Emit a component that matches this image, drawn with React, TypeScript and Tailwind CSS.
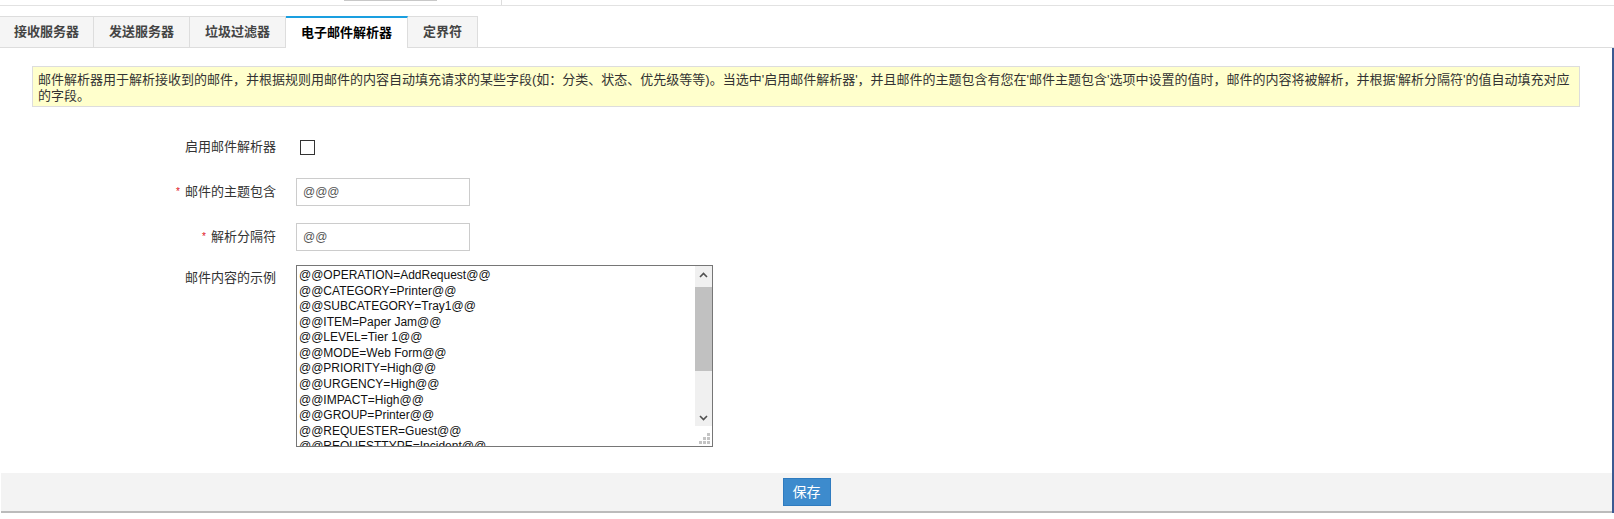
import React from "react";

const FONT = '"Liberation Sans", "Noto Sans CJK SC", Arial, sans-serif';

const tabs = [
  { label: "接收服务器", w: "w-[94px]", active: false },
  { label: "发送服务器", w: "w-[96px]", active: false },
  { label: "垃圾过滤器", w: "w-[96px]", active: false },
  { label: "电子邮件解析器", w: "w-[122px]", active: true },
  { label: "定界符", w: "w-[70px]", active: false },
];

const sampleLines = [
  "@@OPERATION=AddRequest@@",
  "@@CATEGORY=Printer@@",
  "@@SUBCATEGORY=Tray1@@",
  "@@ITEM=Paper Jam@@",
  "@@LEVEL=Tier 1@@",
  "@@MODE=Web Form@@",
  "@@PRIORITY=High@@",
  "@@URGENCY=High@@",
  "@@IMPACT=High@@",
  "@@GROUP=Printer@@",
  "@@REQUESTER=Guest@@",
  "@@REQUESTTYPE=Incident@@",
];

function Star() {
  return <span className="mr-[5px] text-[10px] leading-none text-[#e0151b]">*</span>;
}

export default function App() {
  return (
    <div className="w-[1614px] h-[519px] bg-white overflow-hidden text-[#333]" style={{ fontFamily: FONT }}>
      {/* top strip */}
      <div className="flex h-[6px] border-b border-[#e2e2e2]">
        <div className="w-[344px]" />
        <div className="w-[93px] h-px bg-[#c8c8c8]" />
        <div className="w-[64px]" />
        <div className="h-[5px] border-l border-[#dddddd]" />
      </div>

      {/* tabs */}
      <div className="mt-[10px] flex h-[32px] border-b border-[#dddddd]">
        {tabs.map((t) => (
          <div
            key={t.label}
            className={
              t.active
                ? `${t.w} -mb-px h-[32px] flex items-center justify-center border-t-2 border-t-[#1a9fe0] border-r border-r-[#dddddd] bg-white text-[13px] font-bold text-black`
                : `${t.w} h-[31px] flex items-center justify-center border-t border-r border-[#dddddd] bg-[#f5f5f5] text-[13px] font-bold text-[#444]`
            }
          >
            {t.label}
          </div>
        ))}
      </div>

      {/* content */}
      <div className="flex h-[465px] flex-col border-r-2 border-[#3b5a92]">
        <div className="mx-[32px] mt-[18px] border border-[#dddddd] bg-[#ffffcc] pl-[5px] pr-[4px] pt-[5px] pb-[2px] text-[13px] leading-[16px] text-[#333]">
          <div className="whitespace-nowrap">
            邮件解析器用于解析接收到的邮件，并根据规则用邮件的内容自动填充请求的某些字段(如：分类、状态、优先级等等)。当选中'启用邮件解析器'，并且邮件的主题包含有您在'邮件主题包含'选项中设置的值时，邮件的内容将被解析，并根据'解析分隔符'的值自动填充对应
          </div>
          <div>的字段。</div>
        </div>

        {/* row 1 */}
        <div className="mt-[26px] flex h-[28px] items-center">
          <div className="w-[276px] text-right text-[13px]">启用邮件解析器</div>
          <div className="ml-[24px] h-[15px] w-[15px] border border-[#333] bg-white" />
        </div>

        {/* row 2 */}
        <div className="mt-[17px] flex h-[28px] items-center">
          <div className="flex w-[276px] items-center justify-end text-[13px]">
            <Star />
            邮件的主题包含
          </div>
          <div className="ml-[20px] flex h-[28px] w-[174px] items-center border border-[#cccccc] bg-white pl-[6px] text-[12px] text-[#555]">
            @@@
          </div>
        </div>

        {/* row 3 */}
        <div className="mt-[17px] flex h-[28px] items-center">
          <div className="flex w-[276px] items-center justify-end text-[13px]">
            <Star />
            解析分隔符
          </div>
          <div className="ml-[20px] flex h-[28px] w-[174px] items-center border border-[#cccccc] bg-white pl-[6px] text-[12px] text-[#555]">
            @@
          </div>
        </div>

        {/* row 4 */}
        <div className="mt-[14px] flex items-start">
          <div className="w-[276px] pt-[4px] text-right text-[13px] leading-[17px]">邮件内容的示例</div>
          <div className="ml-[20px] flex h-[182px] w-[417px] border border-[#767676] bg-white">
            <div className="flex-1 overflow-hidden p-[2px] text-[12px] leading-[15.56px] text-[#111]">
              {sampleLines.map((l) => (
                <div key={l} className="whitespace-nowrap">
                  {l}
                </div>
              ))}
            </div>
            <div className="flex w-[17px] flex-col">
              <div className="flex h-[160px] flex-col bg-[#f0f0f0]">
                <div className="flex h-[17px] items-center justify-center">
                  <svg width="9" height="6" viewBox="0 0 9 6">
                    <polyline points="1,5 4.5,1.5 8,5" fill="none" stroke="#505050" strokeWidth="1.6" />
                  </svg>
                </div>
                <div className="mt-[4px] h-[84px] bg-[#c1c1c1]" />
                <div className="flex-1" />
                <div className="flex h-[17px] items-center justify-center">
                  <svg width="9" height="6" viewBox="0 0 9 6">
                    <polyline points="1,1 4.5,4.5 8,1" fill="none" stroke="#505050" strokeWidth="1.6" />
                  </svg>
                </div>
              </div>
              <div className="flex flex-1 items-end justify-end pb-[1px] pr-[1px]">
                <svg width="12" height="12" viewBox="0 0 12 12">
                  <rect x="8" y="0" width="3" height="3" fill="#c4c4c4" />
                  <rect x="4" y="4" width="3" height="3" fill="#c4c4c4" />
                  <rect x="8" y="4" width="3" height="3" fill="#c4c4c4" />
                  <rect x="0" y="8" width="3" height="3" fill="#c4c4c4" />
                  <rect x="4" y="8" width="3" height="3" fill="#c4c4c4" />
                  <rect x="8" y="8" width="3" height="3" fill="#c4c4c4" />
                </svg>
              </div>
            </div>
          </div>
        </div>

        {/* bottom bar */}
        <div className="ml-px mt-[26px] flex h-[40px] items-center justify-center border-b-2 border-[#bbbbbb] bg-[#f3f3f3]">
          <button className="flex h-[28px] w-[48px] items-center justify-center border border-[#2f7bbf] bg-[#3d8bcd] text-[14px] text-white">
            保存
          </button>
        </div>
      </div>
    </div>
  );
}
